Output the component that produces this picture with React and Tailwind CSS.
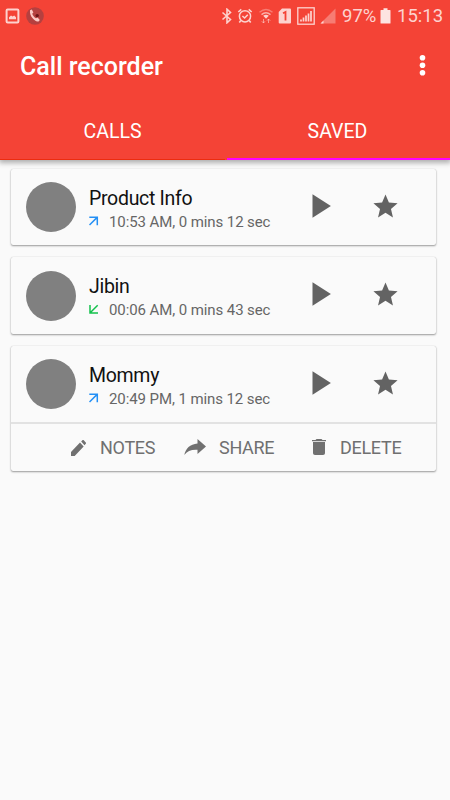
const calls = [
	{ id: 1, name: "Product Info", type: "out", desc: "10:53 AM, 0 mins 12 sec" },
	{ id: 2, name: "Jibin", type: "in", desc: "00:06 AM, 0 mins 43 sec" },
	{ id: 3, name: "Mommy", type: "out", desc: "20:49 PM, 1 mins 12 sec", open: true },
]

function StatusBar() {
	return (
		<div className="flex h-8 items-center text-[#fdd3cf]">
			<svg className="ml-[5px] h-4 w-[15px] shrink-0" viewBox="0 0 15 16" fill="none">
				<rect x="1.6" y="1.6" width="11.8" height="12.8" rx="1" stroke="currentColor" strokeWidth="2" />
				<path d="M4 11.2V9.2l2-1.6 1.6 1 1.6-1.2L11 9.2v2z" fill="currentColor" />
			</svg>
			<svg className="ml-1.5 h-[18px] w-[18px] shrink-0" viewBox="0 0 18 18">
				<circle cx="9" cy="9" r="8.8" fill="#b5403f" />
				<circle cx="11.2" cy="8.6" r="1.7" fill="#6d1518" />
				<path
					d="M4 3.2 5.8 2.6l1.6 3-1.2 1.2c.6 1.8 2 3.5 3.8 4.5l1.6-.8 2.2 2.4-1.2 1.7C8.5 14.6 3.2 9 4 3.2z"
					fill="#fcc8c4"
				/>
			</svg>
			<svg className="ml-[177px] h-4 w-3 shrink-0" viewBox="0 0 12 16" fill="none">
				<path d="m1.5 4.5 8 7L6 14.8V1.2l3.5 3.3-8 7" stroke="currentColor" strokeWidth="1.6" />
			</svg>
			<svg className="ml-1 h-4 w-4 shrink-0" viewBox="0 0 16 16" fill="none" stroke="currentColor">
				<circle cx="8" cy="8.3" r="5.6" strokeWidth="1.5" />
				<path d="m1.3 4 3-2.7M14.7 4l-3-2.7M3.8 12.6l-1.5 2M12.2 12.6l1.5 2M5.4 8l2.2 2 3.2-3.2" strokeWidth="1.6" />
			</svg>
			<svg className="ml-[5px] h-4 w-4 shrink-0" viewBox="0 0 16 16" fill="none" stroke="currentColor">
				<path d="M1.5 4.2q6.5-5.5 13 0" strokeWidth="1.4" opacity=".4" />
				<path d="M3.5 6.6q4.5-3.6 9 0" strokeWidth="1.4" opacity=".75" />
				<path d="M5.2 7.8q2.8-2 5.6 0L8 10.8z" fill="currentColor" stroke="none" />
				<path d="M5.5 15v-4M3.8 13.3 5.5 15l1.5-1.7M10.5 11v4M9 12.7l1.5-1.7 1.7 1.7" opacity=".6" />
			</svg>
			<svg className="ml-1 h-4 w-[14px] shrink-0" viewBox="0 0 14 16">
				<path d="M4 .5h8a1 1 0 0 1 1 1v13a1 1 0 0 1-1 1H1.7a1 1 0 0 1-1-1V4z" fill="currentColor" />
				<path d="M5 5.2 7.5 4v8.5" fill="none" stroke="#f44336" strokeWidth="1.8" />
			</svg>
			<svg className="ml-[5px] h-[18px] w-[18px] shrink-0" viewBox="0 0 18 18" stroke="currentColor" fill="none">
				<rect x=".8" y=".8" width="16.4" height="16.4" strokeWidth="1.3" />
				<path d="M4 12.5v2M6.5 10.5v4M9 8.5v6M11.5 6.5v8M14 4v10.5" strokeWidth="1.7" />
			</svg>
			<svg className="ml-[5px] h-4 w-4 shrink-0" viewBox="0 0 16 16">
				<path d="M15.5.5v15H.5z" fill="currentColor" opacity=".4" />
				<path d="M3.5 12.5v3h-3z" fill="currentColor" />
			</svg>
			<span className="ml-[6px] w-9 text-[18.5px] leading-none whitespace-nowrap">97%</span>
			<svg className="ml-[2px] h-4 w-[11px] shrink-0" viewBox="0 0 11 16">
				<path d="M3.5.3h4V2H10a.5.5 0 0 1 .5.5V15a.5.5 0 0 1-.5.5H1a.5.5 0 0 1-.5-.5V2.5A.5.5 0 0 1 1 2h2.5z" fill="#fde4e1" />
			</svg>
			<span className="ml-[6px] text-[18.5px] leading-none whitespace-nowrap">15:13</span>
		</div>
	)
}

function Header() {
	return (
		<header className="relative bg-[#f44336] text-white shadow-[0_2px_5px_1px_rgba(0,0,0,0.3)]">
			<StatusBar />
			<div className="flex h-[68px] items-center justify-between pr-[24px] pl-5">
				<h1 className="pt-[2px] text-[25px] font-medium">Call recorder</h1>
				<svg className="h-[22px] w-[7px]" viewBox="0 0 7 22" fill="currentColor">
					<circle cx="3.5" cy="2.8" r="2.8" />
					<circle cx="3.5" cy="10.2" r="2.8" />
					<circle cx="3.5" cy="17.7" r="2.8" />
				</svg>
			</div>
			<div className="grid h-[60px] grid-cols-2 text-center text-[19.5px]">
				<div className="flex items-center justify-center border-b border-[#ec2c0f] pt-1">CALLS</div>
				<div className="ml-[2px] flex items-center justify-center border-b-2 border-[#ff00ff] pt-[5px] pr-[2px]">
					SAVED
				</div>
			</div>
		</header>
	)
}

// type : out(발신), in(수신)
function CallArrow({ type }) {
	return type === "out" ? (
		<svg className="-mt-[3px] h-[10px] w-[10px]" viewBox="0 0 10 10" fill="none" stroke="#2490f5" strokeWidth="1.5">
			<path d="M.3 1.2h8v8M8.1 1.4.5 9" />
		</svg>
	) : (
		<svg className="-mt-[3px] h-[10px] w-[10px]" viewBox="0 0 10 10" fill="none" stroke="#13c14c" strokeWidth="1.5">
			<path d="M9 8.9H1v-8M1.2 8.7 8.7 1.2" />
		</svg>
	)
}

function CallItem({ item }) {
	return (
		<div className="rounded-[2px] bg-[#fafafa] shadow-[0_1px_2px_rgba(0,0,0,0.38),0_0_1px_rgba(0,0,0,0.2)]">
			<div className="flex h-[76.5px] items-center pl-[15px]">
				<div className="mt-px h-[50px] w-[50px] rounded-full bg-[#808080]" />
				<div className="ml-[13px] w-[223px] pt-[7px]">
					<div className="text-[19.5px] leading-6 tracking-[-0.3px] text-[#111]">{item.name}</div>
					<div className="-mt-[0.5px] flex h-6 items-center gap-[10px] text-[15px] tracking-[-0.09px] text-[#666]">
						<CallArrow type={item.type} />
						<span>{item.desc}</span>
					</div>
				</div>
				<svg className="-mt-[2px] h-6 w-[19px]" viewBox="0 0 19 24" fill="#636363">
					<path d="M.5.3v23.4L18.9 12z" />
				</svg>
				<svg className="-mt-px ml-[40px] h-[29px] w-[29px]" viewBox="0 0 24 24" fill="#636363">
					<path d="M12 17.27 18.18 21l-1.64-7.03L22 9.24l-7.19-.61L12 2 9.19 8.63 2 9.24l5.46 4.73L5.82 21z" />
				</svg>
			</div>
			{item.open && (
				<div className="flex h-[49px] items-center border-t-2 border-[#e2e2e2] pl-[60px] text-[18px] tracking-[-0.3px] text-[#707070]">
					<svg className="h-4 w-[15px]" viewBox="3 3 18 18" preserveAspectRatio="none" fill="currentColor">
						<path d="M3 16.6V21h4.4L18.2 10.2l-4.4-4.4zM20.7 7.3a1 1 0 0 0 0-1.6l-2.4-2.4a1 1 0 0 0-1.6 0l-1.5 1.5 4 4z" />
					</svg>
					<span className="ml-[14px] w-[57px]">NOTES</span>
					<svg className="-mt-px ml-[27px] h-4 w-[22px]" viewBox="0 0 22 16" fill="currentColor">
						<path d="M13.5 0 22 7.5 13.5 15v-4.3C7.5 10.3 3 12 .3 16 1.5 9.5 6 5 13.5 4.4z" />
					</svg>
					<span className="ml-[13px] w-[57px]">SHARE</span>
					<svg className="-mt-px ml-[36px] h-4 w-[14px]" viewBox="5 3 14 18" preserveAspectRatio="none" fill="currentColor">
						<path d="M6 19a2 2 0 0 0 2 2h8a2 2 0 0 0 2-2V6.5H6zM19 4h-3.500l-1-1h-5l-1 1H5v1.500h14z" />
					</svg>
					<span className="ml-[14px]">DELETE</span>
				</div>
			)}
		</div>
	)
}

function App() {
	return (
		<div className="h-[800px] w-[450px] overflow-hidden bg-[#fafafa] font-[Roboto,sans-serif]">
			<Header />
			<main className="flex flex-col gap-3 pt-[8.5px] pr-[14px] pl-[11px]">
				{calls.map((item) => (
					<CallItem item={item} key={item.id} />
				))}
			</main>
		</div>
	)
}

export default App
